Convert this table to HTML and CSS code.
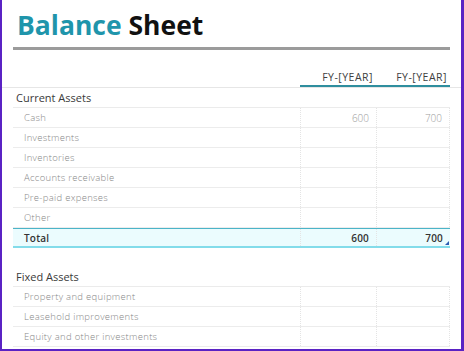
FILE: index.html
```html
<!DOCTYPE html>
<html lang="en">
<head>
    <meta charset="UTF-8">
    <meta name="viewport" content="width=device-width, initial-scale=1.0">
    <title>Balance Sheet</title>
    <link rel="stylesheet" href="styles.css">
</head>
<body>
    <div class="sheet">
        <h1 class="title"><span class="accent">Balance</span> Sheet</h1>
        <div class="rule"></div>

        <div class="head-row">
            <div class="grid">
                <div></div>
                <div class="year">FY-[YEAR]</div>
                <div class="year">FY-[YEAR]</div>
            </div>
        </div>

        <div class="grid section">
            <div class="section-name">Current Assets</div>
        </div>
        <div class="grid item">
            <div class="label">Cash</div>
            <div class="num">600</div>
            <div class="num">700</div>
        </div>
        <div class="grid item">
            <div class="label">Investments</div>
            <div class="num"></div>
            <div class="num"></div>
        </div>
        <div class="grid item">
            <div class="label">Inventories</div>
            <div class="num"></div>
            <div class="num"></div>
        </div>
        <div class="grid item">
            <div class="label">Accounts receivable</div>
            <div class="num"></div>
            <div class="num"></div>
        </div>
        <div class="grid item">
            <div class="label">Pre-paid expenses</div>
            <div class="num"></div>
            <div class="num"></div>
        </div>
        <div class="grid item">
            <div class="label">Other</div>
            <div class="num"></div>
            <div class="num"></div>
        </div>
        <div class="grid item total">
            <div class="label">Total</div>
            <div class="num">600</div>
            <div class="num last">700</div>
        </div>

        <div class="grid section fixed">
            <div class="section-name">Fixed Assets</div>
        </div>
        <div class="grid item">
            <div class="label">Property and equipment</div>
            <div class="num"></div>
            <div class="num"></div>
        </div>
        <div class="grid item">
            <div class="label">Leasehold improvements</div>
            <div class="num"></div>
            <div class="num"></div>
        </div>
        <div class="grid item">
            <div class="label">Equity and other investments</div>
            <div class="num"></div>
            <div class="num"></div>
        </div>
    </div>
</body>
</html>
```

FILE: styles.css
```css
body {
    margin: 0;
    background: #fff;
    font-family: 'Open Sans', sans-serif;
}
.sheet {
    width: 464px;
    height: 351px;
    box-sizing: border-box;
    border-left: 2px solid #5a22c4;
    border-right: 3px solid #5a22c4;
    border-bottom: 2px solid #5a22c4;
    overflow: hidden;
}
.title {
    margin: 0;
    padding: 9px 0 0 15px;
    height: 39px;
    box-sizing: border-box;
    font-size: 26.5px;
    line-height: 32px;
    font-weight: 700;
    color: #111;
}
.title .accent {
    color: #1f95ab;
}
.rule {
    margin: 8px 11px 0 11px;
    height: 3px;
    background: #9b9b9b;
}
.head-row {
    height: 38px;
    box-sizing: border-box;
    border-bottom: 1px solid #e6e6e6;
    display: flex;
    align-items: flex-end;
}
.grid {
    display: grid;
    grid-template-columns: 287px 76px 74px;
    margin: 0 11px;
    height: 20px;
    box-sizing: border-box;
}
.head-row .grid {
    flex: 1;
    height: auto;
}
.year {
    text-align: right;
    padding: 0 3px 1px 0;
    font-size: 10.5px;
    letter-spacing: 0.5px;
    color: #404040;
    border-bottom: 2px solid #2f8e9e;
}
.section {
    border-bottom: 1px solid #ebebeb;
    align-items: center;
}
.section-name {
    padding-left: 3px;
    font-size: 11px;
    color: #3a3a3a;
}
.fixed {
    margin-top: 19px;
}
.item {
    border-bottom: 1px solid #ececec;
    align-items: center;
}
.label {
    padding-left: 11px;
    font-size: 9.5px;
    font-weight: 300;
    letter-spacing: 0.3px;
    color: #878787;
}
.num {
    height: 100%;
    display: flex;
    align-items: center;
    justify-content: flex-end;
    padding-right: 7px;
    font-size: 10px;
    font-weight: 300;
    color: #9c9c9c;
    border-left: 1px dotted #e4e4e4;
}
.num:last-child {
    border-right: 1px dotted #e4e4e4;
}
.total {
    background: #ebfcfe;
    border-top: 1px solid #4bb4c8;
    border-bottom: 2px solid #83dcea;
    height: 20px;
}
.total .label,
.total .num {
    color: #333;
    font-weight: 600;
    letter-spacing: 0.2px;
    font-size: 10px;
}
.total .num:last-child {
    border-right: none;
}
.last {
    position: relative;
}
.last::after {
    content: "";
    position: absolute;
    right: 1px;
    bottom: 1px;
    border-left: 4px solid transparent;
    border-bottom: 4px solid #2b5cb3;
}
```
